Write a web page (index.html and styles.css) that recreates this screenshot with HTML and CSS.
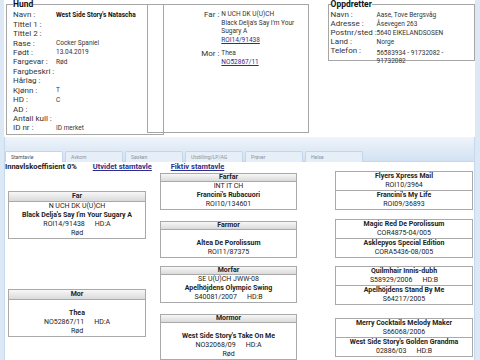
FILE: index.html
```html
<!DOCTYPE html>
<html lang="no">
<head>
  <meta charset="UTF-8" />
  <title>Hund - West Side Story's Natascha</title>
  <link rel="stylesheet" href="styles.css">
</head>
<body>
  <div class="page">

    <!-- Hundeinfo -->
    <div class="top">
      <fieldset class="hund">
        <legend>Hund</legend>
        <div class="info">
          <span class="lbl">Navn :</span><span class="val strong">West Side Story's Natascha</span>
          <span class="lbl">Tittel 1 :</span><span class="val"></span>
          <span class="lbl">Tittel 2 :</span><span class="val"></span>
          <span class="lbl">Rase :</span><span class="val">Cocker Spaniel</span>
          <span class="lbl">Født :</span><span class="val">13.04.2019</span>
          <span class="lbl">Fargevar :</span><span class="val">Rød</span>
          <span class="lbl">Fargbeskri :</span><span class="val"></span>
          <span class="lbl">Hårlag :</span><span class="val"></span>
          <span class="lbl">Kjønn :</span><span class="val">T</span>
          <span class="lbl">HD :</span><span class="val">C</span>
          <span class="lbl">AD :</span><span class="val"></span>
          <span class="lbl">Antall kull :</span><span class="val"></span>
          <span class="lbl">ID nr :</span><span class="val">ID merket</span>
        </div>
      </fieldset>

      <div class="parents">
        <div class="prow">
          <span class="lbl">Far :</span>
          <div class="val">N UCH DK U(U)CH<br>Black Delja's Say I'm Your<br>Sugary A<br><a href="#">ROI14/91438</a></div>
        </div>
        <div class="prow">
          <span class="lbl">Mor :</span>
          <div class="val">Thea<br><a href="#">NO52867/11</a></div>
        </div>
      </div>

      <fieldset class="oppdretter">
        <legend>Oppdretter</legend>
        <div class="info">
          <span class="lbl">Navn :</span><span class="val">Aase, Tove Bergsvåg</span>
          <span class="lbl">Adresse :</span><span class="val">Åsevegen 263</span>
          <span class="lbl">Postnr/sted :</span><span class="val">5640 EIKELANDSOSEN</span>
          <span class="lbl">Land :</span><span class="val">Norge</span>
          <span class="lbl">Telefon :</span><span class="val tel">56583934 - 91732082 -<br>91732082</span>
        </div>
      </fieldset>
    </div>

    <!-- Faner -->
    <div class="tabs-panel">
      <ul class="tabs">
        <li class="active">Stamtavle</li>
        <li>Avkom</li>
        <li>Søsken</li>
        <li>Utstilling/LP/AG</li>
        <li>Prøver</li>
        <li>Helse</li>
      </ul>

      <div class="tab-body">
        <div class="links">
          <b>Innavlskoeffisient 0%</b>
          <a href="#" class="first">Utvidet stamtavle</a>
          <a href="#">Fiktiv stamtavle</a>
        </div>

        <div class="pedigree">
          <div class="col col1">
            <div class="dog">
              <h4>Far</h4>
              <p>N UCH DK U(U)CH</p>
              <p class="name">Black Delja's Say I'm Your Sugary A</p>
              <p>ROI14/91438<span class="hd">HD:A</span></p>
              <p>Rød</p>
            </div>
            <div class="dog">
              <h4>Mor</h4>
              <p>&nbsp;</p>
              <p class="name">Thea</p>
              <p>NO52867/11<span class="hd">HD:A</span></p>
              <p>Rød</p>
            </div>
          </div>

          <div class="col col2">
            <div class="dog">
              <h4>Farfar</h4>
              <p>INT IT CH</p>
              <p class="name">Francini's Rubacuori</p>
              <p>ROI10/134601</p>
            </div>
            <div class="dog">
              <h4>Farmor</h4>
              <p>&nbsp;</p>
              <p class="name">Altea De Porolissum</p>
              <p>ROI11/87375</p>
            </div>
            <div class="dog">
              <h4>Morfar</h4>
              <p>SE U(U)CH JWW-08</p>
              <p class="name">Apelhöjdens Olympic Swing</p>
              <p>S40081/2007<span class="hd">HD:B</span></p>
            </div>
            <div class="dog">
              <h4>Mormor</h4>
              <p>&nbsp;</p>
              <p class="name">West Side Story's Take On Me</p>
              <p>NO32068/09<span class="hd">HD:A</span></p>
              <p>Rød</p>
            </div>
          </div>

          <div class="col col3">
            <div class="pair">
              <div class="half">
                <p class="name">Flyers Xpress Mail</p>
                <p>ROI10/3964</p>
              </div>
              <div class="half">
                <p class="name">Francini's My Life</p>
                <p>ROI09/36893</p>
              </div>
            </div>
            <div class="pair">
              <div class="half">
                <p class="name">Magic Red De Porolissum</p>
                <p>COR4875-04/005</p>
              </div>
              <div class="half">
                <p class="name">Asklepyos Special Edition</p>
                <p>CORA5436-08/005</p>
              </div>
            </div>
            <div class="pair">
              <div class="half">
                <p class="name">Quilmhair Innis-dubh</p>
                <p>S58929/2006<span class="hd">HD:B</span></p>
              </div>
              <div class="half">
                <p class="name">Apelhöjdens Stand By Me</p>
                <p>S64217/2005</p>
              </div>
            </div>
            <div class="pair">
              <div class="half">
                <p class="name">Merry Cocktails Melody Maker</p>
                <p>S66068/2006</p>
              </div>
              <div class="half">
                <p class="name">West Side Story's Golden Grandma</p>
                <p>02886/03<span class="hd">HD:B</span></p>
              </div>
            </div>
          </div>
        </div>
      </div>
    </div>

  </div>
</body>
</html>
```

FILE: styles.css
```css
body {
  margin: 0;
  background-color: #dce8f5;
  font-family: Roboto, "Noto Sans", sans-serif;
  color: #222;
  height: 360px;
  overflow: hidden;
}
.page {
  margin: 0 5px 0 4px;
  background-color: white;
  min-height: 360px;
}
a {
  color: #2e2e8e;
}

/* toppen */
.top {
  display: flex;
  align-items: flex-start;
  height: 137px;
}
fieldset {
  margin: 0;
  padding: 0;
  min-width: 0;
  border: 1px solid #a6a6a6;
}
legend {
  font-size: 8.5px;
  font-weight: bold;
  line-height: 9px;
  padding: 0;
  color: #111;
}
.lbl {
  font-size: 8px;
  color: #333;
}
.val {
  font-size: 6.5px;
  color: #333;
}
.val.strong {
  font-weight: bold;
  color: #111;
}
.hund {
  margin-left: 2px;
  width: 153px;
  height: 132px;
  padding: 1px 0 0 6px;
}
.hund .info {
  display: grid;
  grid-template-columns: 43px 1fr;
  grid-auto-rows: 9.45px;
  align-items: center;
  white-space: nowrap;
}

.parents {
  margin: 4px 0 0 -17px;
  width: 162px;
  height: 122px;
  border: 1px solid #a6a6a6;
  padding-top: 5px;
}
.prow {
  display: grid;
  grid-template-columns: 73px 1fr;
  align-items: start;
  margin-bottom: 4px;
}
.prow .lbl {
  text-align: right;
  line-height: 9px;
  padding-right: 2px;
}
.prow .val {
  line-height: 8.7px;
}

.oppdretter {
  margin-left: 19px;
  width: 146px;
  height: 58px;
  padding: 1px 0 0 2px;
}
.oppdretter .info {
  display: grid;
  grid-template-columns: 46px 1fr;
  grid-auto-rows: 9px;
  align-items: center;
  white-space: nowrap;
}
.oppdretter .tel {
  line-height: 8px;
  grid-row: span 2;
  align-self: center;
  padding-top: 3px;
}
.oppdretter .lbl:last-of-type {
  grid-row: span 2;
  padding-top: 3px;
}

/* faner */
.tabs-panel {
  border-left: 1px solid #c5d9ee;
  border-right: 1px solid #c5d9ee;
}
.tabs {
  list-style: none;
  margin: 0;
  padding: 0;
  height: 24px;
  display: flex;
  align-items: flex-end;
  gap: 2px;
  background: linear-gradient(#eef4fa, #d3e2f2);
  border-bottom: 1px solid #c5d7ec;
}
.tabs li {
  width: 51px;
  height: 10px;
  padding-left: 5px;
  margin-bottom: -1px;
  font-size: 5px;
  line-height: 10px;
  color: #8a939d;
  background-color: #e6eef7;
  border: 1px solid #c3d5ea;
  border-bottom: none;
  border-radius: 2px 2px 0 0;
  white-space: nowrap;
}
.tabs li.active {
  background-color: white;
  color: #4a4f55;
}

.links {
  font-size: 7.5px;
  line-height: 9px;
  height: 9px;
  white-space: nowrap;
}
.links a {
  font-weight: bold;
  margin-left: 17px;
}
.links a.first {
  margin-left: 14px;
}

/* stamtavle */
.pedigree {
  display: flex;
  align-items: flex-start;
  padding-left: 3px;
}
.col {
  display: flex;
  flex-direction: column;
}
.col1 {
  width: 138px;
  margin-top: 20px;
  gap: 50px;
}
.col2 {
  width: 137px;
  margin: 2px 0 0 14px;
}
.col3 {
  width: 138px;
  margin-left: 38px;
}
.col2 .dog:nth-child(2) { margin-top: 11px; }
.col2 .dog:nth-child(3) { margin-top: 8px; }
.col2 .dog:nth-child(4) { margin-top: 11px; }
.col3 .pair:nth-child(2) { margin-top: 9px; }
.col3 .pair:nth-child(3) { margin-top: 8px; }
.col3 .pair:nth-child(4) { margin-top: 13px; }

.dog, .pair {
  border: 1px solid #a9a9a9;
  text-align: center;
  font-size: 7px;
  line-height: 9px;
  color: #222;
}
.dog h4 {
  margin: 0;
  font-size: 7px;
  height: 7px;
  line-height: 7px;
  background: linear-gradient(#f7f7f7, #dadada);
  border-bottom: 1px solid #a9a9a9;
}
.col1 .dog h4 {
  height: 9px;
  line-height: 9px;
}
.dog p, .pair p {
  margin: 0;
  white-space: nowrap;
}
.name {
  font-weight: bold;
}
.hd {
  margin-left: 10px;
}
.half + .half {
  border-top: 1px solid #a9a9a9;
}
```
